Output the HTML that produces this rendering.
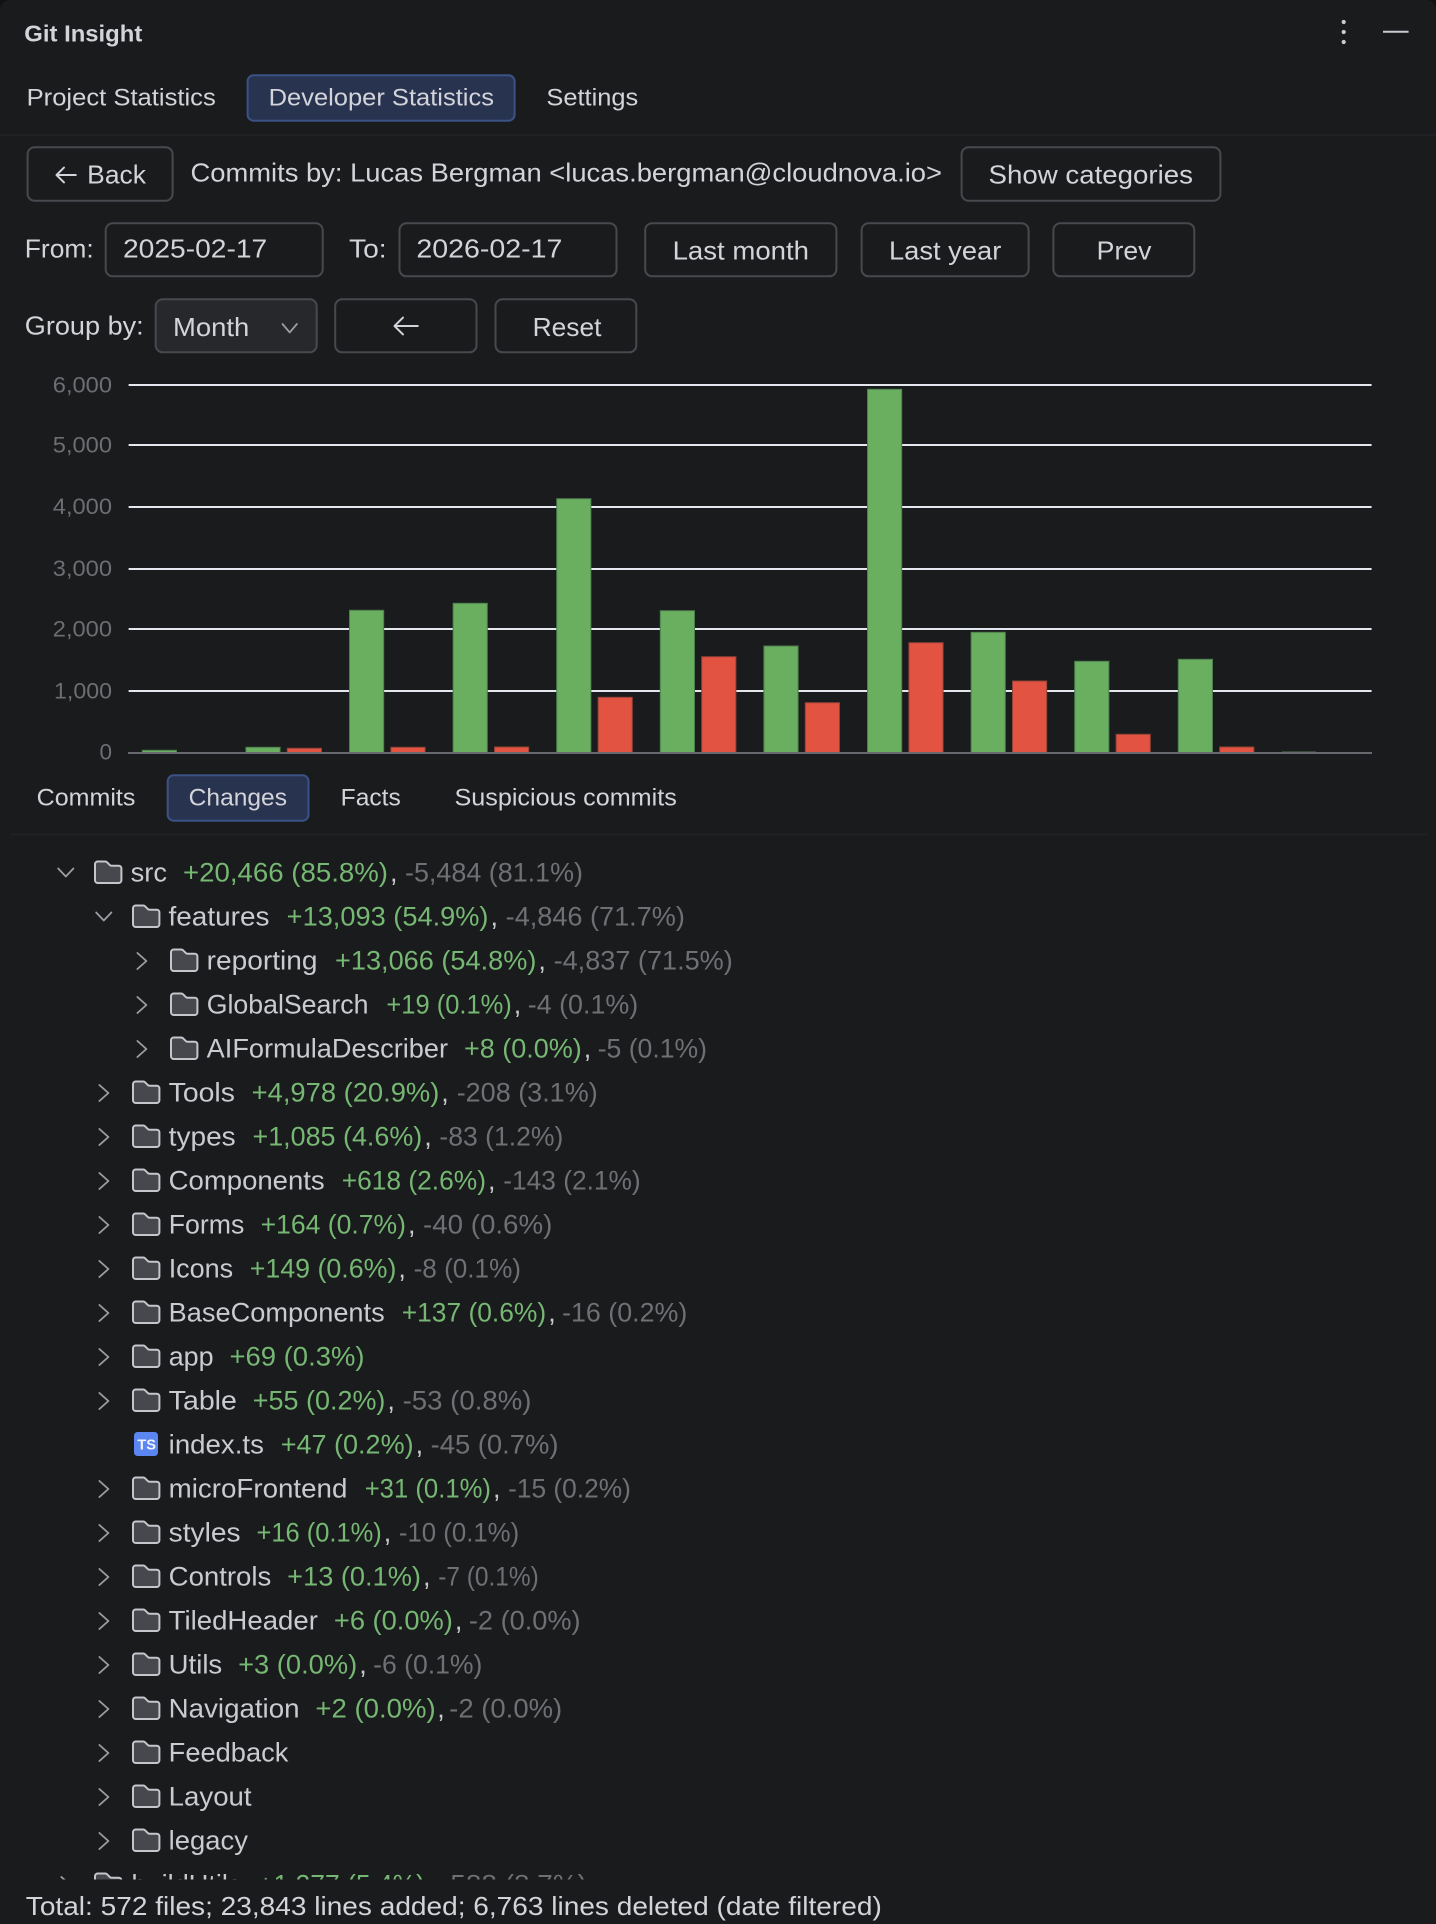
<!DOCTYPE html>
<html lang="en"><head><meta charset="utf-8"><title>Git Insight</title>
<style>
html,body{margin:0;padding:0;background:#111214;width:1436px;height:1924px;overflow:hidden}
svg{display:block}
text{font-family:"Liberation Sans",Arial,sans-serif;white-space:pre}
.u{font-size:26px;fill:#d3d4d9}
.tb{font-size:24.5px;fill:#d3d4d9}
.n{font-size:27px;fill:#c9cbd0}
.g{font-size:27px;fill:#76b873}
.c{font-size:27px;fill:#c9cbd0}
.m{font-size:27px;fill:#6e7074}
.a{font-size:22.5px;fill:#6c6e72}
.b{fill:none;stroke:#48494e;stroke-width:2}
.ch{fill:none;stroke:#9c9ea2;stroke-width:1.8;stroke-linecap:round;stroke-linejoin:round}
.f{fill:#47484d;stroke:#c4c6cb;stroke-width:2;stroke-linejoin:round}
.gb{fill:#6aae5f;stroke:#4d7e4e;stroke-width:1}
.rb{fill:#e35341;stroke:#8f4338;stroke-width:1}
.gl{stroke:#e4e7ee;stroke-width:2}
</style></head><body>
<svg xmlns="http://www.w3.org/2000/svg" width="1436" height="1924" viewBox="0 0 1436 1924">
<defs>
<path id="fo" d="M0 3.2a2.7 2.7 0 0 1 2.7-2.7h7.4c.8 0 1.5.3 2 .8l2.6 2.6c.5.5 1.2.8 2 .8h7a2.7 2.7 0 0 1 2.7 2.7v11.9a2.7 2.7 0 0 1-2.7 2.7H2.7a2.7 2.7 0 0 1-2.7-2.7z"/>
<path id="cr" d="M0-8 9 0 0 8"/>
<path id="cd" d="M-7.6-4 0 4 7.6-4"/>
<clipPath id="tc"><rect x="0" y="840" width="1436" height="1039.5"/></clipPath>
</defs>
<rect x="0" y="0" width="1436" height="1960" rx="10" fill="#1a1b1d"/>

<!-- header -->
<text x="24.3" y="41.7" font-size="23.5" font-weight="700" fill="#d3d4d9" textLength="118" lengthAdjust="spacingAndGlyphs">Git Insight</text>
<circle cx="1343.7" cy="22" r="2.1" fill="#c9cbd0"/><circle cx="1343.7" cy="32" r="2.1" fill="#c9cbd0"/><circle cx="1343.7" cy="42" r="2.1" fill="#c9cbd0"/>
<line x1="1383" y1="31.7" x2="1408.6" y2="31.7" stroke="#c9cbd0" stroke-width="2"/>

<!-- top tabs -->
<text class="tb" x="26.6" y="105.5" textLength="189.2" lengthAdjust="spacingAndGlyphs">Project Statistics</text>
<rect x="247.6" y="75.3" width="267" height="45.4" rx="6" fill="#283350" stroke="#3b5287" stroke-width="2"/>
<text class="tb" x="268.6" y="105.5" textLength="225.4" lengthAdjust="spacingAndGlyphs">Developer Statistics</text>
<text class="tb" x="546.4" y="105.5" textLength="91.8" lengthAdjust="spacingAndGlyphs">Settings</text>
<line x1="0" y1="135" x2="1436" y2="135" stroke="#1f2124" stroke-width="2"/>

<!-- row 1 -->
<rect class="b" x="27.6" y="147.3" width="145" height="53.4" rx="7"/>
<path d="M75.8 175H56.5M64 167.6 56.5 175 64 182.4" fill="none" stroke="#d3d4d9" stroke-width="2" stroke-linecap="round" stroke-linejoin="round"/>
<text class="u" x="87.2" y="183.3" textLength="58.8" lengthAdjust="spacingAndGlyphs">Back</text>
<text class="u" x="190.5" y="181.7" textLength="751.5" lengthAdjust="spacingAndGlyphs">Commits by: Lucas Bergman &lt;lucas.bergman@cloudnova.io&gt;</text>
<rect class="b" x="961.6" y="147.3" width="258.8" height="53.4" rx="7"/>
<text class="u" x="988.5" y="183.3" textLength="204.5" lengthAdjust="spacingAndGlyphs">Show categories</text>

<!-- row 2 -->
<text class="u" x="24.8" y="257.3" textLength="68.9" lengthAdjust="spacingAndGlyphs">From:</text>
<rect class="b" x="105.7" y="223.3" width="217" height="53" rx="7"/>
<text class="u" x="123" y="257.3" textLength="144.2" lengthAdjust="spacingAndGlyphs">2025-02-17</text>
<text class="u" x="349" y="257.3" textLength="37.6" lengthAdjust="spacingAndGlyphs">To:</text>
<rect class="b" x="399.5" y="223.3" width="217" height="53" rx="7"/>
<text class="u" x="416.4" y="257.3" textLength="146" lengthAdjust="spacingAndGlyphs">2026-02-17</text>
<rect class="b" x="645.2" y="223.3" width="191.2" height="53" rx="7"/>
<text class="u" x="672.6" y="259.3" textLength="136.4" lengthAdjust="spacingAndGlyphs">Last month</text>
<rect class="b" x="861.6" y="223.3" width="167" height="53" rx="7"/>
<text class="u" x="889" y="259.3" textLength="112.3" lengthAdjust="spacingAndGlyphs">Last year</text>
<rect class="b" x="1053.4" y="223.3" width="140.9" height="53" rx="7"/>
<text class="u" x="1096.7" y="259.3" textLength="54.8" lengthAdjust="spacingAndGlyphs">Prev</text>

<!-- row 3 -->
<text class="u" x="24.8" y="334.3" textLength="118.9" lengthAdjust="spacingAndGlyphs">Group by:</text>
<rect x="155.7" y="299.3" width="161" height="53" rx="7" fill="#26282c" stroke="#48494e" stroke-width="2"/>
<text class="u" x="173" y="336" textLength="76.3" lengthAdjust="spacingAndGlyphs">Month</text>
<path d="M282.5 324 289.7 332.4 296.9 324" class="ch"/>
<rect class="b" x="335.2" y="299.3" width="141.3" height="53" rx="7"/>
<path d="M417.8 326H394.5M403 317.6 394.5 326 403 334.4" fill="none" stroke="#d3d4d9" stroke-width="2" stroke-linecap="round" stroke-linejoin="round"/>
<rect class="b" x="495.5" y="299.3" width="140.8" height="53" rx="7"/>
<text class="u" x="532.6" y="336" textLength="68.9" lengthAdjust="spacingAndGlyphs">Reset</text>

<!-- chart -->
<text class="a" x="52.8" y="392.3" textLength="59.2" lengthAdjust="spacingAndGlyphs">6,000</text>
<text class="a" x="52.8" y="452.7" textLength="59.2" lengthAdjust="spacingAndGlyphs">5,000</text>
<text class="a" x="52.8" y="514" textLength="59.2" lengthAdjust="spacingAndGlyphs">4,000</text>
<text class="a" x="52.8" y="576" textLength="59.2" lengthAdjust="spacingAndGlyphs">3,000</text>
<text class="a" x="52.8" y="636.7" textLength="59.2" lengthAdjust="spacingAndGlyphs">2,000</text>
<text class="a" x="54" y="698.3" textLength="58" lengthAdjust="spacingAndGlyphs">1,000</text>
<text class="a" x="99.5" y="759.3" textLength="12.5" lengthAdjust="spacingAndGlyphs">0</text>
<line class="gl" x1="128.6" y1="385" x2="1371.6" y2="385"/>
<line class="gl" x1="128.6" y1="445" x2="1371.6" y2="445"/>
<line class="gl" x1="128.6" y1="507" x2="1371.6" y2="507"/>
<line class="gl" x1="128.6" y1="569" x2="1371.6" y2="569"/>
<line class="gl" x1="128.6" y1="629" x2="1371.6" y2="629"/>
<line class="gl" x1="128.6" y1="691" x2="1371.6" y2="691"/>
<rect class="gb" x="142.3" y="750.3" width="34.2" height="3"/>
<rect x="183.7" y="752" width="34.2" height="1" fill="#5a2f2b"/>
<rect class="gb" x="245.9" y="747.3" width="34.2" height="6"/>
<rect class="rb" x="287.3" y="748.3" width="34.2" height="5"/>
<rect class="gb" x="349.5" y="610.3" width="34.2" height="143"/>
<rect class="rb" x="390.9" y="747.3" width="34.2" height="6"/>
<rect class="gb" x="453.1" y="603.3" width="34.2" height="150"/>
<rect class="rb" x="494.5" y="747" width="34.2" height="6.3"/>
<rect class="gb" x="556.7" y="498.7" width="34.2" height="254.6"/>
<rect class="rb" x="598.1" y="697.3" width="34.2" height="56"/>
<rect class="gb" x="660.3" y="610.7" width="34.2" height="142.6"/>
<rect class="rb" x="701.7" y="656.7" width="34.2" height="96.6"/>
<rect class="gb" x="763.9" y="646" width="34.2" height="107.3"/>
<rect class="rb" x="805.3" y="702.7" width="34.2" height="50.6"/>
<rect class="gb" x="867.5" y="389.3" width="34.2" height="364"/>
<rect class="rb" x="908.9" y="642.7" width="34.2" height="110.6"/>
<rect class="gb" x="971.1" y="632.3" width="34.2" height="121"/>
<rect class="rb" x="1012.5" y="681" width="34.2" height="72.3"/>
<rect class="gb" x="1074.7" y="661.3" width="34.2" height="92"/>
<rect class="rb" x="1116.1" y="734.3" width="34.2" height="19"/>
<rect class="gb" x="1178.3" y="659.3" width="34.2" height="94"/>
<rect class="rb" x="1219.7" y="747" width="34.2" height="6.3"/>
<rect x="1281.9" y="751.3" width="34.2" height="2" fill="#3c5a3e"/>
<rect x="1323.3" y="752.4" width="34.2" height="1" fill="#5a2f2b"/>
<line x1="128" y1="753" x2="1372" y2="753" stroke="#67686d" stroke-width="2"/>

<!-- sub tabs -->
<text class="tb" x="36.7" y="805.3" textLength="98.7" lengthAdjust="spacingAndGlyphs">Commits</text>
<rect x="167.7" y="775.3" width="140.8" height="45.4" rx="6" fill="#283350" stroke="#3b5287" stroke-width="2"/>
<text class="tb" x="188.7" y="805.3" textLength="98.3" lengthAdjust="spacingAndGlyphs">Changes</text>
<text class="tb" x="340.7" y="805.3" textLength="60.1" lengthAdjust="spacingAndGlyphs">Facts</text>
<text class="tb" x="454.5" y="805.3" textLength="222.3" lengthAdjust="spacingAndGlyphs">Suspicious commits</text>
<line x1="10" y1="834.5" x2="1428" y2="834.5" stroke="#1f2124" stroke-width="2"/>

<!-- tree -->
<g clip-path="url(#tc)">
<!-- 0 src -->
<use href="#cd" class="ch" x="65.8" y="872.5"/><use href="#fo" class="f" x="95" y="861"/>
<text class="n" x="130.7" y="881.7" textLength="36.3" lengthAdjust="spacingAndGlyphs">src</text>
<text class="g" x="183" y="881.7" textLength="205" lengthAdjust="spacingAndGlyphs">+20,466 (85.8%)</text><text class="c" x="390" y="881.7">,</text>
<text class="m" x="405" y="881.7" textLength="178" lengthAdjust="spacingAndGlyphs">-5,484 (81.1%)</text>
<!-- 1 features -->
<use href="#cd" class="ch" x="103.8" y="916.5"/><use href="#fo" class="f" x="133" y="905"/>
<text class="n" x="168.5" y="925.7" textLength="101" lengthAdjust="spacingAndGlyphs">features</text>
<text class="g" x="286.7" y="925.7" textLength="201.8" lengthAdjust="spacingAndGlyphs">+13,093 (54.9%)</text><text class="c" x="490.5" y="925.7">,</text>
<text class="m" x="505.7" y="925.7" textLength="179.2" lengthAdjust="spacingAndGlyphs">-4,846 (71.7%)</text>
<!-- 2 reporting -->
<use href="#cr" class="ch" x="137.4" y="961"/><use href="#fo" class="f" x="171" y="949"/>
<text class="n" x="206.7" y="969.7" textLength="110.8" lengthAdjust="spacingAndGlyphs">reporting</text>
<text class="g" x="335" y="969.7" textLength="201.4" lengthAdjust="spacingAndGlyphs">+13,066 (54.8%)</text><text class="c" x="538.4" y="969.7">,</text>
<text class="m" x="553.6" y="969.7" textLength="179.2" lengthAdjust="spacingAndGlyphs">-4,837 (71.5%)</text>
<!-- 3 GlobalSearch -->
<use href="#cr" class="ch" x="137.4" y="1005"/><use href="#fo" class="f" x="171" y="993"/>
<text class="n" x="206.7" y="1013.7" textLength="161.8" lengthAdjust="spacingAndGlyphs">GlobalSearch</text>
<text class="g" x="386.4" y="1013.7" textLength="125.4" lengthAdjust="spacingAndGlyphs">+19 (0.1%)</text><text class="c" x="513.8" y="1013.7">,</text>
<text class="m" x="527.8" y="1013.7" textLength="110.4" lengthAdjust="spacingAndGlyphs">-4 (0.1%)</text>
<!-- 4 AIFormulaDescriber -->
<use href="#cr" class="ch" x="137.4" y="1049"/><use href="#fo" class="f" x="171" y="1037"/>
<text class="n" x="206.7" y="1057.7" textLength="241.3" lengthAdjust="spacingAndGlyphs">AIFormulaDescriber</text>
<text class="g" x="464" y="1057.7" textLength="117.8" lengthAdjust="spacingAndGlyphs">+8 (0.0%)</text><text class="c" x="583.8" y="1057.7">,</text>
<text class="m" x="597.7" y="1057.7" textLength="109.3" lengthAdjust="spacingAndGlyphs">-5 (0.1%)</text>
<!-- 5 Tools -->
<use href="#cr" class="ch" x="99.4" y="1093"/><use href="#fo" class="f" x="133" y="1081"/>
<text class="n" x="168.7" y="1101.7" textLength="66.2" lengthAdjust="spacingAndGlyphs">Tools</text>
<text class="g" x="251.7" y="1101.7" textLength="187.6" lengthAdjust="spacingAndGlyphs">+4,978 (20.9%)</text><text class="c" x="441.3" y="1101.7">,</text>
<text class="m" x="456.7" y="1101.7" textLength="141" lengthAdjust="spacingAndGlyphs">-208 (3.1%)</text>
<!-- 6 types -->
<use href="#cr" class="ch" x="99.4" y="1137"/><use href="#fo" class="f" x="133" y="1125"/>
<text class="n" x="168.7" y="1145.7" textLength="67" lengthAdjust="spacingAndGlyphs">types</text>
<text class="g" x="252.5" y="1145.7" textLength="169.7" lengthAdjust="spacingAndGlyphs">+1,085 (4.6%)</text><text class="c" x="424.2" y="1145.7">,</text>
<text class="m" x="439.4" y="1145.7" textLength="124" lengthAdjust="spacingAndGlyphs">-83 (1.2%)</text>
<!-- 7 Components -->
<use href="#cr" class="ch" x="99.4" y="1181"/><use href="#fo" class="f" x="133" y="1169"/>
<text class="n" x="168.7" y="1189.7" textLength="156" lengthAdjust="spacingAndGlyphs">Components</text>
<text class="g" x="341.7" y="1189.7" textLength="144.3" lengthAdjust="spacingAndGlyphs">+618 (2.6%)</text><text class="c" x="488" y="1189.7">,</text>
<text class="m" x="503.3" y="1189.7" textLength="137.4" lengthAdjust="spacingAndGlyphs">-143 (2.1%)</text>
<!-- 8 Forms -->
<use href="#cr" class="ch" x="99.4" y="1225"/><use href="#fo" class="f" x="133" y="1213"/>
<text class="n" x="168.7" y="1233.7" textLength="75.6" lengthAdjust="spacingAndGlyphs">Forms</text>
<text class="g" x="260.6" y="1233.7" textLength="145.4" lengthAdjust="spacingAndGlyphs">+164 (0.7%)</text><text class="c" x="408" y="1233.7">,</text>
<text class="m" x="423" y="1233.7" textLength="129.3" lengthAdjust="spacingAndGlyphs">-40 (0.6%)</text>
<!-- 9 Icons -->
<use href="#cr" class="ch" x="99.4" y="1269"/><use href="#fo" class="f" x="133" y="1257"/>
<text class="n" x="168.7" y="1277.7" textLength="64.5" lengthAdjust="spacingAndGlyphs">Icons</text>
<text class="g" x="249.7" y="1277.7" textLength="146.7" lengthAdjust="spacingAndGlyphs">+149 (0.6%)</text><text class="c" x="398.4" y="1277.7">,</text>
<text class="m" x="413.6" y="1277.7" textLength="107.4" lengthAdjust="spacingAndGlyphs">-8 (0.1%)</text>
<!-- 10 BaseComponents -->
<use href="#cr" class="ch" x="99.4" y="1313"/><use href="#fo" class="f" x="133" y="1301"/>
<text class="n" x="168.7" y="1321.7" textLength="216" lengthAdjust="spacingAndGlyphs">BaseComponents</text>
<text class="g" x="401.7" y="1321.7" textLength="144.5" lengthAdjust="spacingAndGlyphs">+137 (0.6%)</text><text class="c" x="548.2" y="1321.7">,</text>
<text class="m" x="562.1" y="1321.7" textLength="125.2" lengthAdjust="spacingAndGlyphs">-16 (0.2%)</text>
<!-- 11 app -->
<use href="#cr" class="ch" x="99.4" y="1357"/><use href="#fo" class="f" x="133" y="1345"/>
<text class="n" x="168.7" y="1365.7" textLength="44.9" lengthAdjust="spacingAndGlyphs">app</text>
<text class="g" x="229.5" y="1365.7" textLength="135" lengthAdjust="spacingAndGlyphs">+69 (0.3%)</text>
<!-- 12 Table -->
<use href="#cr" class="ch" x="99.4" y="1401"/><use href="#fo" class="f" x="133" y="1389"/>
<text class="n" x="168.7" y="1409.7" textLength="68.2" lengthAdjust="spacingAndGlyphs">Table</text>
<text class="g" x="252.8" y="1409.7" textLength="132.6" lengthAdjust="spacingAndGlyphs">+55 (0.2%)</text><text class="c" x="387.4" y="1409.7">,</text>
<text class="m" x="402.6" y="1409.7" textLength="128.9" lengthAdjust="spacingAndGlyphs">-53 (0.8%)</text>
<!-- 13 index.ts -->
<rect x="134" y="1432" width="24" height="24" rx="3.5" fill="#5b85f0"/>
<text x="137.4" y="1449.6" font-size="14.5" font-weight="700" fill="#f2f5ff" textLength="18.6" lengthAdjust="spacingAndGlyphs">TS</text>
<text class="n" x="168.7" y="1453.7" textLength="95.2" lengthAdjust="spacingAndGlyphs">index.ts</text>
<text class="g" x="280.7" y="1453.7" textLength="132.9" lengthAdjust="spacingAndGlyphs">+47 (0.2%)</text><text class="c" x="415.6" y="1453.7">,</text>
<text class="m" x="430.6" y="1453.7" textLength="127.9" lengthAdjust="spacingAndGlyphs">-45 (0.7%)</text>
<!-- 14 microFrontend -->
<use href="#cr" class="ch" x="99.4" y="1489"/><use href="#fo" class="f" x="133" y="1477"/>
<text class="n" x="168.7" y="1497.7" textLength="178.7" lengthAdjust="spacingAndGlyphs">microFrontend</text>
<text class="g" x="364.7" y="1497.7" textLength="126.3" lengthAdjust="spacingAndGlyphs">+31 (0.1%)</text><text class="c" x="493" y="1497.7">,</text>
<text class="m" x="508.1" y="1497.7" textLength="122.8" lengthAdjust="spacingAndGlyphs">-15 (0.2%)</text>
<!-- 15 styles -->
<use href="#cr" class="ch" x="99.4" y="1533"/><use href="#fo" class="f" x="133" y="1521"/>
<text class="n" x="168.7" y="1541.7" textLength="71.9" lengthAdjust="spacingAndGlyphs">styles</text>
<text class="g" x="256.5" y="1541.7" textLength="125.2" lengthAdjust="spacingAndGlyphs">+16 (0.1%)</text><text class="c" x="383.7" y="1541.7">,</text>
<text class="m" x="398.9" y="1541.7" textLength="120.3" lengthAdjust="spacingAndGlyphs">-10 (0.1%)</text>
<!-- 16 Controls -->
<use href="#cr" class="ch" x="99.4" y="1577"/><use href="#fo" class="f" x="133" y="1565"/>
<text class="n" x="168.7" y="1585.7" textLength="102.6" lengthAdjust="spacingAndGlyphs">Controls</text>
<text class="g" x="287.2" y="1585.7" textLength="133.8" lengthAdjust="spacingAndGlyphs">+13 (0.1%)</text><text class="c" x="423" y="1585.7">,</text>
<text class="m" x="438.2" y="1585.7" textLength="100.6" lengthAdjust="spacingAndGlyphs">-7 (0.1%)</text>
<!-- 17 TiledHeader -->
<use href="#cr" class="ch" x="99.4" y="1621"/><use href="#fo" class="f" x="133" y="1609"/>
<text class="n" x="168.7" y="1629.7" textLength="149.2" lengthAdjust="spacingAndGlyphs">TiledHeader</text>
<text class="g" x="333.9" y="1629.7" textLength="119" lengthAdjust="spacingAndGlyphs">+6 (0.0%)</text><text class="c" x="454.9" y="1629.7">,</text>
<text class="m" x="468.9" y="1629.7" textLength="111.7" lengthAdjust="spacingAndGlyphs">-2 (0.0%)</text>
<!-- 18 Utils -->
<use href="#cr" class="ch" x="99.4" y="1665"/><use href="#fo" class="f" x="133" y="1653"/>
<text class="n" x="168.7" y="1673.7" textLength="53.5" lengthAdjust="spacingAndGlyphs">Utils</text>
<text class="g" x="238.1" y="1673.7" textLength="119.1" lengthAdjust="spacingAndGlyphs">+3 (0.0%)</text><text class="c" x="359.2" y="1673.7">,</text>
<text class="m" x="373.1" y="1673.7" textLength="109.3" lengthAdjust="spacingAndGlyphs">-6 (0.1%)</text>
<!-- 19 Navigation -->
<use href="#cr" class="ch" x="99.4" y="1709"/><use href="#fo" class="f" x="133" y="1697"/>
<text class="n" x="168.7" y="1717.7" textLength="130.8" lengthAdjust="spacingAndGlyphs">Navigation</text>
<text class="g" x="315.4" y="1717.7" textLength="120.3" lengthAdjust="spacingAndGlyphs">+2 (0.0%)</text><text class="c" x="437.2" y="1717.7">,</text>
<text class="m" x="449.2" y="1717.7" textLength="113" lengthAdjust="spacingAndGlyphs">-2 (0.0%)</text>
<!-- 20 Feedback -->
<use href="#cr" class="ch" x="99.4" y="1753"/><use href="#fo" class="f" x="133" y="1741"/>
<text class="n" x="168.7" y="1761.7" textLength="119.7" lengthAdjust="spacingAndGlyphs">Feedback</text>
<!-- 21 Layout -->
<use href="#cr" class="ch" x="99.4" y="1797"/><use href="#fo" class="f" x="133" y="1785"/>
<text class="n" x="168.7" y="1805.7" textLength="82.9" lengthAdjust="spacingAndGlyphs">Layout</text>
<!-- 22 legacy -->
<use href="#cr" class="ch" x="99.4" y="1841"/><use href="#fo" class="f" x="133" y="1829"/>
<text class="n" x="168.7" y="1849.7" textLength="79.2" lengthAdjust="spacingAndGlyphs">legacy</text>
<!-- 23 buildUtils -->
<use href="#cr" class="ch" x="61.4" y="1885"/><use href="#fo" class="f" x="95" y="1873"/>
<text class="n" x="131.5" y="1893.7" textLength="110" lengthAdjust="spacingAndGlyphs">buildUtils</text>
<text class="g" x="258" y="1893.7" textLength="167" lengthAdjust="spacingAndGlyphs">+1,277 (5.4%)</text><text class="c" x="427" y="1893.7">,</text>
<text class="m" x="441" y="1893.7" textLength="146" lengthAdjust="spacingAndGlyphs">-588 (8.7%)</text>
</g>

<!-- footer -->
<text class="u" x="25.8" y="1915" textLength="856" lengthAdjust="spacingAndGlyphs">Total: 572 files; 23,843 lines added; 6,763 lines deleted (date filtered)</text>
</svg>
</body></html>
